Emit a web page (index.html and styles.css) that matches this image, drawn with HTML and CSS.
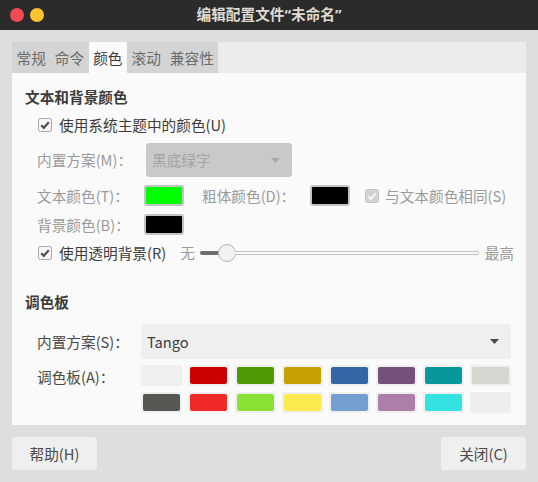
FILE: index.html
```html
<!DOCTYPE html>
<html lang="zh-CN">
<head>
<meta charset="utf-8">
<title>编辑配置文件</title>
<link rel="stylesheet" href="styles.css">
</head>
<body>
<div class="window">
  <header class="titlebar">
    <div class="controls"><span class="dot dot-red"></span><span class="dot dot-yellow"></span></div>
    <div class="title">编辑配置文件“未命名”</div>
    <div></div>
  </header>
  <main class="content">
    <section class="notebook">
      <nav class="tabs">
        <span class="tab">常规</span>
        <span class="tab">命令</span>
        <span class="tab active">颜色</span>
        <span class="tab">滚动</span>
        <span class="tab">兼容性</span>
      </nav>
      <div class="page">
        <h2 class="heading heading-first">文本和背景颜色</h2>

        <div class="row row-system">
          <svg class="check" viewBox="0 0 14 14"><rect x="0.5" y="0.5" width="13" height="13" rx="2" fill="#f6f6f6" stroke="#a9a9a9"/><path d="M3.2 7.2 L5.8 9.8 L10.8 4.2" fill="none" stroke="#505050" stroke-width="2.2"/></svg>
          <span class="text">使用系统主题中的颜色(U)</span>
        </div>

        <div class="row row-scheme">
          <span class="label dim">内置方案(M)：</span>
          <div class="combo combo-disabled">
            <span>黑底绿字</span>
            <svg class="arrow" viewBox="0 0 9 5"><path d="M0 0 H9 L4.5 5 Z" fill="#a9a9a9"/></svg>
          </div>
        </div>

        <div class="row row-text">
          <span class="label dim">文本颜色(T)：</span>
          <span class="swatch-btn" style="background:#00ff00"></span>
          <span class="label label-bold dim">粗体颜色(D)：</span>
          <span class="swatch-btn" style="background:#000000"></span>
          <svg class="check check-same" viewBox="0 0 14 14"><rect x="0.5" y="0.5" width="13" height="13" rx="2" fill="#d2d2d2" stroke="#c2c2c2"/><path d="M3.2 7.2 L5.8 9.8 L10.8 4.2" fill="none" stroke="#f4f4f4" stroke-width="2.2"/></svg>
          <span class="text dim">与文本颜色相同(S)</span>
        </div>

        <div class="row row-bg">
          <span class="label dim">背景颜色(B)：</span>
          <span class="swatch-btn" style="background:#000000"></span>
        </div>

        <div class="row row-transparent">
          <svg class="check" viewBox="0 0 14 14"><rect x="0.5" y="0.5" width="13" height="13" rx="2" fill="#f6f6f6" stroke="#a9a9a9"/><path d="M3.2 7.2 L5.8 9.8 L10.8 4.2" fill="none" stroke="#505050" stroke-width="2.2"/></svg>
          <span class="text">使用透明背景(R)</span>
          <span class="scale-min dim">无</span>
          <div class="slider">
            <span class="slider-fill"></span>
            <span class="slider-knob"></span>
            <span class="slider-track"></span>
          </div>
          <span class="scale-max dim">最高</span>
        </div>

        <h2 class="heading heading-palette">调色板</h2>

        <div class="row row-builtin">
          <span class="label label-palette">内置方案(S)：</span>
          <div class="combo combo-tango">
            <span>Tango</span>
            <svg class="arrow" viewBox="0 0 9 5"><path d="M0 0 H9 L4.5 5 Z" fill="#4a4a4a"/></svg>
          </div>
        </div>

        <div class="palette-row">
          <span class="label label-palette label-swatches">调色板(A)：</span>
          <div class="swatches">
            <span class="sw"><i style="background:#f0f0f0"></i></span>
            <span class="sw"><i style="background:#cc0000"></i></span>
            <span class="sw"><i style="background:#4e9a06"></i></span>
            <span class="sw"><i style="background:#c4a000"></i></span>
            <span class="sw"><i style="background:#3465a4"></i></span>
            <span class="sw"><i style="background:#75507b"></i></span>
            <span class="sw"><i style="background:#06989a"></i></span>
            <span class="sw"><i style="background:#d3d7cf"></i></span>
            <span class="sw"><i style="background:#555753"></i></span>
            <span class="sw"><i style="background:#ef2929"></i></span>
            <span class="sw"><i style="background:#8ae234"></i></span>
            <span class="sw"><i style="background:#fce94f"></i></span>
            <span class="sw"><i style="background:#729fcf"></i></span>
            <span class="sw"><i style="background:#ad7fa8"></i></span>
            <span class="sw"><i style="background:#34e2e2"></i></span>
            <span class="sw"><i style="background:#eeeeec"></i></span>
          </div>
        </div>
      </div>
    </section>
    <footer class="actions">
      <span class="btn">帮助(H)</span>
      <span class="btn">关闭(C)</span>
    </footer>
  </main>
</div>
</body>
</html>
```
FILE: styles.css
```css
html, body {
  margin: 0;
  padding: 0;
}
body {
  width: 538px;
  height: 482px;
  overflow: hidden;
  background: #dedede;
  font-family: "Noto Sans CJK SC", "Noto Sans", sans-serif;
  font-size: 14.667px;
  line-height: 1.2;
  color: #3c3c3c;
}
.titlebar {
  height: 30px;
  background: #2b2b2b;
  display: grid;
  grid-template-columns: 1fr auto 1fr;
  align-items: center;
}
.controls {
  display: flex;
  gap: 6px;
  padding-left: 10px;
}
.dot {
  width: 14px;
  height: 14px;
  border-radius: 50%;
}
.dot-red { background: #f04b55; }
.dot-yellow { background: #fcc42e; }
.title {
  color: #dfdbd2;
  font-family: "Noto Sans", "Noto Sans CJK SC", sans-serif;
  font-weight: bold;
  font-size: 14.667px;
}
.content {
  padding: 12px;
  display: flex;
  flex-direction: column;
  gap: 12px;
}
.tabs {
  display: flex;
  height: 31px;
  background: #ececec;
}
.tab {
  display: flex;
  align-items: center;
  padding: 0 4.5px;
  background: #d4d4d4;
  color: #6b6b6b;
}
.tab.active {
  background: #fafafa;
  color: #3c3c3c;
}
.page {
  height: 352px;
  box-sizing: border-box;
  background: #fafafa;
  padding: 0 12px 0 13px;
  display: flex;
  flex-direction: column;
}
.heading {
  margin: 0;
  height: 18px;
  display: flex;
  align-items: center;
  font-size: 14.667px;
  font-weight: bold;
  color: #3c3c3c;
}
.heading-first { margin-top: 15px; }
.heading-palette { margin-top: 30px; }
.row {
  display: flex;
  align-items: center;
  padding-left: 12px;
}
.dim { color: #9a9a9a; }
.check {
  width: 14px;
  height: 14px;
  flex: none;
  margin-left: 1px;
  margin-right: 7px;
}
.row-system { margin-top: 9px; height: 20px; }
.row-scheme { margin-top: 8px; height: 34px; }
.row-text { margin-top: 8px; height: 21px; }
.row-bg { margin-top: 8px; height: 21px; }
.row-transparent { margin-top: 8px; height: 20px; }
.row-builtin { margin-top: 13px; height: 35px; }
.label {
  width: 107px;
  flex: none;
  white-space: nowrap;
}
.label-bold {
  width: 108px;
  margin-left: 18px;
}
.label-palette {
  width: 104px;
  color: #4a4a4a;
}
.combo {
  display: flex;
  align-items: center;
  justify-content: space-between;
  box-sizing: border-box;
  border-radius: 3px;
  padding-left: 6px;
}
.combo-disabled {
  width: 146px;
  height: 34px;
  margin-left: 2px;
  background: #c9c9c9;
  color: #a3a3a3;
  padding-right: 12px;
}
.combo-tango {
  flex: 1;
  height: 35px;
  margin-right: 3px;
  background: #efefef;
  color: #3c3c3c;
  padding-right: 12px;
}
.arrow {
  width: 9px;
  height: 5px;
}
.swatch-btn {
  width: 40px;
  height: 21px;
  flex: none;
  box-sizing: border-box;
  border: 2px solid #c3c3c3;
  border-radius: 3px;
}
.check-same {
  margin-left: 15px;
  margin-right: 6px;
}
.scale-min {
  margin-left: 14px;
}
.slider {
  flex: 1;
  display: flex;
  align-items: center;
  margin: 0 6px 0 5px;
  height: 20px;
}
.slider-fill {
  width: 19px;
  height: 4px;
  background: #6e6e6e;
  border-radius: 2px 0 0 2px;
  flex: none;
}
.slider-knob {
  width: 18px;
  height: 18px;
  box-sizing: border-box;
  border: 1px solid #b4b4b4;
  border-radius: 50%;
  background: #f2f2f2;
  flex: none;
  margin-left: -1px;
  margin-right: -1px;
}
.slider-track {
  flex: 1;
  height: 4px;
  box-sizing: border-box;
  border: 1px solid #c2c2c2;
  border-left: none;
  background: #fbfbfb;
  border-radius: 0 2px 2px 0;
}
.palette-row {
  display: flex;
  padding-left: 12px;
  margin-top: 6px;
}
.label-swatches {
  padding-top: 3px;
}
.swatches {
  display: grid;
  grid-template-columns: repeat(8, 41px);
  grid-auto-rows: 21px;
  gap: 6px;
}
.sw {
  background: #efefef;
  border-radius: 2px;
  padding: 2px;
  box-sizing: border-box;
  display: flex;
}
.sw i {
  flex: 1;
  border-radius: 2px;
}
.actions {
  display: flex;
  justify-content: space-between;
}
.btn {
  width: 85px;
  height: 33px;
  background: #efefef;
  border-radius: 3px;
  display: flex;
  align-items: center;
  justify-content: center;
  color: #4a4a4a;
}
```
